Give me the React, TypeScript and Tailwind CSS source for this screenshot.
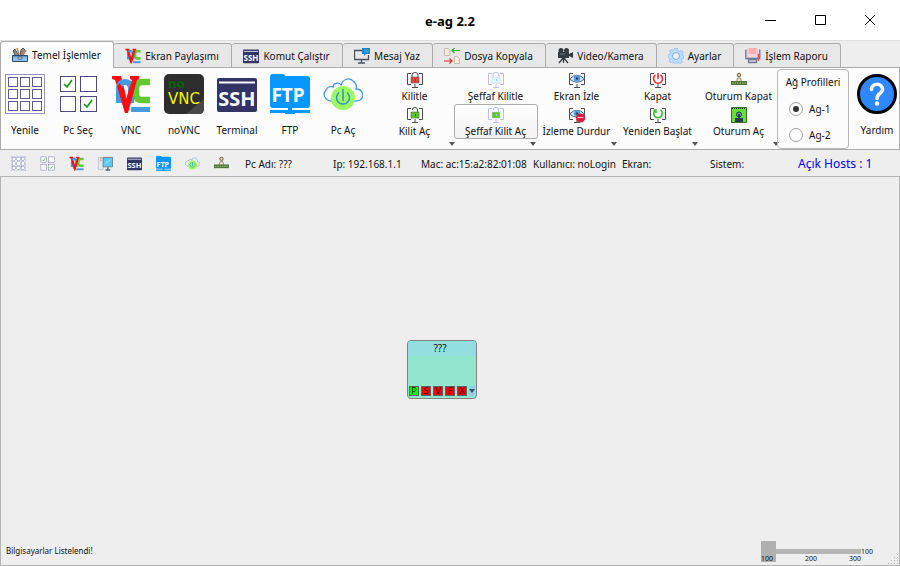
import React, { useState } from "react";

type IconProps = { className?: string };
type IconType = (props: IconProps) => React.ReactElement;

const GridIcon: IconType = ({ className }) => (
  <svg viewBox="0 0 40 40" className={className} fill="#fff" stroke="#5c5c94" aria-hidden="true">
    <rect x=".5" y=".5" width="39" height="39" stroke="#9393bd" />
    {[3.5, 15.5, 27.5].map((y) =>
      [3.5, 15.5, 27.5].map((x) => <rect key={`${x}-${y}`} x={x} y={y} width="9" height="9" />)
    )}
  </svg>
);

const SelectIcon: IconType = ({ className }) => (
  <svg viewBox="0 0 40 40" className={className} fill="none" aria-hidden="true">
    <g stroke="#4f4a80" fill="#fff">
      <rect x="2.5" y="2.5" width="15" height="15" />
      <rect x="22.5" y="2.5" width="16" height="15" />
      <rect x="2.5" y="22.5" width="15" height="15" />
      <rect x="22.5" y="22.5" width="16" height="15" />
    </g>
    <path d="M6 10l3 3 5-7M26 30l3 3 5-7" stroke="#129a12" strokeWidth="1.6" />
  </svg>
);

const VncIcon: IconType = ({ className }) => (
  <svg viewBox="0 0 40 40" className={className} fill="none" aria-hidden="true">
    <path d="M39 8h-8q-6 0-6 6v6q0 6 6 6h8" stroke="#63c832" strokeWidth="6.500" />
    <path d="M20 33h19v5H20z" fill="#459be0" />
    <path d="M1 2h9l5 20L14 38 4 6 1 5z" fill="#f80d12" />
    <path d="M8 29V15q0-7 6-7t6 7v14" stroke="#459be0" strokeWidth="6" />
    <path d="M9 9l6 16 6-19-2-1V2h9v3l-2 1-9 33h-3L6 12z" fill="#f80d12" />
  </svg>
);

const NoVncIcon: IconType = ({ className }) => (
  <svg viewBox="0 0 40 40" className={className} aria-hidden="true">
    <rect width="40" height="40" rx="5" fill="#2d2d2d" />
    <path d="M40 25v10q0 5-5 5H22z" fill="#484848" />
    <g fontFamily="DejaVu Sans, sans-serif">
      <text x="4" y="14" fontSize="12" fontWeight="bold" fill="#0a610a">no</text>
      <text x="4" y="30" fontSize="15" fill="#f5f500">VNC</text>
    </g>
  </svg>
);

const SshIcon: IconType = ({ className }) => (
  <svg viewBox="0 0 40 40" className={className} aria-hidden="true">
    <rect y="4" width="40" height="34" rx="2" fill="#333366" />
    <path d="M2 8.500h36" stroke="#fff" strokeWidth="2" />
    <text x="20" y="32" textAnchor="middle" fontFamily="Noto Sans, sans-serif" fontWeight="bold" fontSize="20" fill="#fff">SSH</text>
  </svg>
);

const FtpIcon: IconType = ({ className }) => (
  <svg viewBox="0 0 40 40" className={className} aria-hidden="true">
    <path d="M0 3q0-3 3-3h10q2 0 2 2h22q3 0 3 3v26q0 3-3 3H3q-3 0-3-3zM0 36h15v3H0zM25 36h15v3H25zM18 33h4v3h3v4H15v-4h3z" fill="#0896ff" />
    <text x="18" y="28" textAnchor="middle" fontFamily="Noto Sans, sans-serif" fontWeight="bold" fontSize="19" fill="#fff">FTP</text>
  </svg>
);

const CloudPowerIcon: IconType = ({ className }) => (
  <svg viewBox="0 0 40 40" className={className} fill="none" aria-hidden="true">
    <path d="M9 27C2 27-1 20 3 16c1-3 4-4 7-3 0-4 6-5 8-2 2-6 8-8 12-4 3 2 4 5 3 8 7 0 9 8 4 11-2 1-4 1-6 1" stroke="#4397dd" strokeWidth="1.300" />
    <circle cx="20" cy="24" r="12" fill="#99fa62" />
    <path d="M16 18.500a6.500 6.500 0 1 0 8 0M20 15v12" stroke="#3191c8" strokeWidth="1.500" />
  </svg>
);

const ToolboxIcon: IconType = ({ className }) => (
  <svg viewBox="0 0 16 16" className={className} aria-hidden="true">
    <path d="M3 8L1 4l2-2 1 2 3 4M8 8l1-5 2-2 2 2-2 5" fill="#8d8d8d" stroke="#333" strokeWidth=".8" />
    <path d="M5 1l2 6M14 3l-3 5" stroke="#c98752" strokeWidth="1.500" />
    <path d="M.5 8.500h15v6H.5z" fill="#8fc4ef" stroke="#304867" />
    <path d="M1 9h14M6 10h4v2H6z" stroke="#304867" strokeWidth=".8" fill="#e4f3ff" />
  </svg>
);

const MessageIcon: IconType = ({ className }) => (
  <svg viewBox="0 0 16 16" className={className} aria-hidden="true">
    <path d="M8 2.500H.5v9h14V7M7.500 12v3M4 15h7" fill="none" stroke="#48525c" strokeWidth="1.300" />
    <path d="M8 0h8v6h-4l-2 2V6H8z" fill="#1686c8" />
    <path d="M10 2h5M10 4h5" stroke="#8ccaf0" strokeWidth=".6" />
  </svg>
);

const CopyIcon: IconType = ({ className }) => (
  <svg viewBox="0 0 16 16" className={className} fill="none" aria-hidden="true">
    <path d="M.5.500h4l1.500 2v5H.5zM10.500 8.500h3l2 2v5h-5z" stroke="#c8bdad" fill="#f4ecdf" />
    <path d="M16 2.500H8M10.500 0L8 2.500 10.500 5" stroke="#20b32e" strokeWidth="1.200" />
    <path d="M0 13h8M5.500 10.500L8 13l-2.500 2.500" stroke="#d92b2b" strokeWidth="1.200" />
  </svg>
);

const CameraIcon: IconType = ({ className }) => (
  <svg viewBox="0 0 16 16" className={className} aria-hidden="true">
    <circle cx="4" cy="2.500" r="2.500" fill="#343b42" />
    <circle cx="9.500" cy="2.500" r="2.500" fill="#343b42" />
    <path d="M1 4h11v6H1zM12 6l4-2v6l-4-2z" fill="#343b42" />
    <path d="M6.500 10v5M6 10l-4 5M7 10l4 5" stroke="#343b42" strokeWidth="1.300" />
    <path d="M3 6h5" stroke="#68737b" />
  </svg>
);

const GearIcon: IconType = ({ className }) => (
  <svg viewBox="0 0 16 16" className={className} aria-hidden="true">
    <path d="M6.500.5h3l.5 2 1.500.7 2-.9 1.600 2-1 1.700.5 1.500 1.400.5v2l-2 .8-.6 1.400.9 1.800-2 1.500-1.800-1-1.500.5-.5 1.500h-2l-.8-1.900-1.500-.6-1.800 1-1.500-2 1-1.800-.5-1.500L0 9V7l1.900-.8.6-1.500-1-1.600 2-1.600 1.500 1z" fill="#bfdcfa" stroke="#8abcf0" strokeWidth=".7" />
    <circle cx="8" cy="8" r="3.500" fill="#e8f4ff" stroke="#75afe9" />
  </svg>
);

const ReportIcon: IconType = ({ className }) => (
  <svg viewBox="0 0 16 16" className={className} aria-hidden="true">
    <path d="M.8 1.500v9h14v-9M3.500 14.500v-3h8v3z" fill="#d5d5e0" stroke="#747696" strokeWidth="1.300" />
    <path d="M3 0h9v9H3z" fill="#ffd7d9" />
    <path d="M3.500 1h8M3.500 3h8M3.500 5h8" stroke="#ef737c" strokeWidth=".8" />
    <path d="M13.500 6v7" stroke="#e54f57" strokeWidth="1.500" />
  </svg>
);

const PcIcon: IconType = ({ className }) => (
  <svg viewBox="0 0 16 16" className={className} aria-hidden="true">
    <path d="M.5 1.500h5v13h-5z" fill="#e5ebef" stroke="#bcc6cc" />
    <path d="M2 3h2M2 5h2" stroke="#de8888" />
    <path d="M5.500 1.500h10v10h-10z" fill="#5bcaf6" stroke="#6c8390" />
    <path d="M10.500 12v3M8 15h5" stroke="#4b6570" strokeWidth="1.500" />
    <path d="M8 8l5-4" stroke="#b5ecff" />
  </svg>
);

const Monitor = ({ color = "#4b4b4b" }: { color?: string }) => (
  <path d="M4 1.500H.5v11H4M12 1.500h3.500v11H12M8 12v3M5 15.500h6" fill="none" stroke={color} />
);

const Lock = ({ frame, body, shackle, open }: { frame?: string; body: string; shackle: string; open?: boolean }) => (
  <>
    <Monitor color={frame} />
    <path d={open ? "M5.500 3V2q0-1.500 2.500-1.500T10.500 3v3" : "M5 6V3q0-2.500 3-2.500T11 3v3"} fill="none" stroke={shackle} />
    <rect x="4" y="5" width="8" height="6" fill={body} stroke={shackle} strokeWidth=".5" />
    <path d="M8.500 7v2" stroke={shackle} />
  </>
);

const LockIcon: IconType = ({ className }) => (
  <svg viewBox="0 0 16 16" className={className} aria-hidden="true"><Lock body="#e44839" shackle="#57444a" /></svg>
);
const UnlockIcon: IconType = ({ className }) => (
  <svg viewBox="0 0 16 16" className={className} aria-hidden="true"><Lock body="#5cc52b" shackle="#42533d" open /></svg>
);
const GlassLockIcon: IconType = ({ className }) => (
  <svg viewBox="0 0 16 16" className={className} aria-hidden="true"><Lock frame="#bcbcf7" body="#dcffff" shackle="#b5c4ef" /></svg>
);
const GlassUnlockIcon: IconType = ({ className }) => (
  <svg viewBox="0 0 16 16" className={className} aria-hidden="true"><Lock frame="#bcbcf7" body="#61cb2c" shackle="#afc6dd" open /></svg>
);

const Eye = () => (
  <>
    <Monitor />
    <path d="M.5 7Q8-.5 15.500 7 8 13.500.5 7z" fill="#cae8ff" stroke="#4a6075" />
    <circle cx="8" cy="6.500" r="3.200" fill="#5a9fe5" />
    <circle cx="8" cy="6.500" r="1.200" fill="#234476" />
  </>
);
const EyeIcon: IconType = ({ className }) => (
  <svg viewBox="0 0 16 16" className={className} aria-hidden="true"><Eye /></svg>
);
const EyeStopIcon: IconType = ({ className }) => (
  <svg viewBox="0 0 16 16" className={className} aria-hidden="true">
    <Eye />
    <circle cx="11.500" cy="11" r="4.500" fill="#df1c3d" />
    <path d="M8.500 10.500h6" stroke="#ffc5cf" />
  </svg>
);
const PowerIcon: IconType = ({ className }) => (
  <svg viewBox="0 0 16 16" className={className} fill="none" aria-hidden="true">
    <Monitor />
    <path d="M5.500 3a4.500 4.500 0 1 0 5 0M8 1v6" stroke="#ee3034" strokeWidth="1.600" />
  </svg>
);
const RestartIcon: IconType = ({ className }) => (
  <svg viewBox="0 0 16 16" className={className} fill="none" aria-hidden="true">
    <Monitor />
    <path d="M10.500 3a4.300 4.300 0 1 1-5 0M3.500 3H6v3" stroke="#35bf37" strokeWidth="1.600" />
  </svg>
);
const LogoutIcon: IconType = ({ className }) => (
  <svg viewBox="0 0 16 16" className={className} aria-hidden="true">
    <circle cx="8" cy="3" r="1.800" fill="#d8cba8" stroke="#6e6044" />
    <path d="M5.500 10l1-4h3l1 4z" fill="#eee3c3" stroke="#756a4e" strokeWidth=".7" />
    <path d="M0 9h16v4H0z" fill="#517638" />
    <path d="M1 11h14" stroke="#b3c487" strokeDasharray="1.500 1" />
  </svg>
);
const LoginIcon: IconType = ({ className }) => (
  <svg viewBox="0 0 16 16" className={className} aria-hidden="true">
    <path d="M.5.500h15v15H.5z" fill="#69dc37" stroke="#386f27" />
    <path d="M1 1.500h14" stroke="#263b24" strokeDasharray="1 1" />
    <path d="M4 15v-4h8v4z" fill="#263d55" />
    <circle cx="8" cy="7.500" r="2.500" fill="#6895b9" stroke="#253b46" />
    <path d="M8 7v4" stroke="#17334a" strokeWidth="1.500" />
  </svg>
);
const HelpIcon: IconType = ({ className }) => (
  <svg viewBox="0 0 40 40" className={className} aria-hidden="true">
    <circle cx="20" cy="20" r="18.500" fill="#2f88ff" stroke="#000" strokeWidth="3" />
    <path d="M14.500 15.500c0-7 11-7 11 0 0 4-5.500 4-5.500 9" fill="none" stroke="#fff" strokeWidth="3.500" strokeLinecap="round" />
    <circle cx="20" cy="29.500" r="2.200" fill="#fff" />
  </svg>
);

const tabs: { label: string; icon: IconType; width: string }[] = [
  { label: "Temel İşlemler", icon: ToolboxIcon, width: "w-[114px]" },
  { label: "Ekran Paylaşımı", icon: VncIcon, width: "w-[118px]" },
  { label: "Komut Çalıştır", icon: SshIcon, width: "w-[111px]" },
  { label: "Mesaj Yaz", icon: MessageIcon, width: "w-[90px]" },
  { label: "Dosya Kopyala", icon: CopyIcon, width: "w-[113px]" },
  { label: "Video/Kamera", icon: CameraIcon, width: "w-[111px]" },
  { label: "Ayarlar", icon: GearIcon, width: "w-[77px]" },
  { label: "İşlem Raporu", icon: ReportIcon, width: "w-[107px]" },
];

const tools: { label: string; icon: IconType }[] = [
  { label: "Yenile", icon: GridIcon },
  { label: "Pc Seç", icon: SelectIcon },
  { label: "VNC", icon: VncIcon },
  { label: "noVNC", icon: NoVncIcon },
  { label: "Terminal", icon: SshIcon },
  { label: "FTP", icon: FtpIcon },
  { label: "Pc Aç", icon: CloudPowerIcon },
];

const groups: { label: string; icon: IconType; active?: boolean }[][] = [
  [{ label: "Kilitle", icon: LockIcon }, { label: "Kilit Aç", icon: UnlockIcon }],
  [{ label: "Şeffaf Kilitle", icon: GlassLockIcon }, { label: "Şeffaf Kilit Aç", icon: GlassUnlockIcon, active: true }],
  [{ label: "Ekran İzle", icon: EyeIcon }, { label: "İzleme Durdur", icon: EyeStopIcon }],
  [{ label: "Kapat", icon: PowerIcon }, { label: "Yeniden Başlat", icon: RestartIcon }],
  [{ label: "Oturum Kapat", icon: LogoutIcon }, { label: "Oturum Aç", icon: LoginIcon }],
];

const quick: { label: string; icon: IconType }[] = [
  { label: "Yenile", icon: GridIcon },
  { label: "Pc Seç", icon: SelectIcon },
  { label: "VNC", icon: VncIcon },
  { label: "Ekran", icon: PcIcon },
  { label: "Terminal", icon: SshIcon },
  { label: "FTP", icon: FtpIcon },
  { label: "Pc Aç", icon: CloudPowerIcon },
  { label: "Oturum Kapat", icon: LogoutIcon },
];

const info: { text: string; width: string }[] = [
  { text: "Pc Adı: ???", width: "w-[88px]" },
  { text: "Ip: 192.168.1.1", width: "w-[88px]" },
  { text: "Mac: ac:15:a2:82:01:08", width: "w-[112px]" },
  { text: "Kullanıcı: noLogin", width: "w-[89px]" },
  { text: "Ekran:", width: "w-[88px]" },
  { text: "Sistem:", width: "w-[88px]" },
];

const ports = [
  { letter: "P", color: "bg-[#00ff00]" },
  { letter: "S", color: "bg-[#ff0000]" },
  { letter: "V", color: "bg-[#ff0000]" },
  { letter: "F", color: "bg-[#ff0000]" },
  { letter: "X", color: "bg-[#ff0000]" },
];

const Arrow = () => (
  <svg viewBox="0 0 6 4" className="h-1 w-1.5" aria-hidden="true">
    <path d="M0 0h6L3 4z" fill="currentColor" />
  </svg>
);

export default function App() {
  const [tab, setTab] = useState(0);
  const [profile, setProfile] = useState("Ag-1");
  const [zoom, setZoom] = useState(100);

  return (
    <div className="flex min-h-screen flex-col overflow-hidden bg-[#eeeeee] font-['Noto_Sans',sans-serif] text-[10px] leading-4 text-[#111111]">
      <header className="grid h-10 shrink-0 grid-cols-[1fr_auto_1fr] items-center bg-white">
        <h1 className="col-start-2 pt-0.5 text-[13px] font-bold text-black">e-ag 2.2</h1>
        <div className="flex justify-end gap-[26px] pr-[18px] text-black">
          {["Küçült", "Büyüt", "Kapat"].map((label, i) => (
            <button key={label} aria-label={label} className="flex size-6 items-center justify-center">
              <svg viewBox="0 0 12 12" className="size-3" fill="none" stroke="currentColor" aria-hidden="true">
                {i === 0 && <path d="M1 6.500h11" />}
                {i === 1 && <path d="M1.500 1.500h10v9h-10z" />}
                {i === 2 && <path d="M1 1l10 10M11 1L1 11" />}
              </svg>
            </button>
          ))}
        </div>
      </header>

      <div role="tablist" className="flex h-7 shrink-0 items-end border-t border-[#dedede]">
        {tabs.map(({ label, icon: Icon, width }, i) => (
          <button
            key={label}
            role="tab"
            aria-selected={tab === i}
            onClick={() => setTab(i)}
            className={`flex shrink-0 items-center justify-center gap-1 rounded-t-[3px] border-t border-r border-[#ababab] pr-px whitespace-nowrap ${width} ${
              tab === i ? "h-[27px] border-l bg-[#fcfcfc]" : "h-[25px] border-b bg-[#e7e7e7]"
            }`}
          >
            <Icon className="size-4 shrink-0" />
            {label}
          </button>
        ))}
        <div className="h-px flex-1 bg-[#ababab]" />
      </div>

      <section className="flex h-[82px] shrink-0 border-x border-b border-[#ababab] bg-[#fcfcfc]">
        <div className="flex shrink-0 gap-[5px] pt-1.5">
          {tools.map(({ label, icon: Icon }) => (
            <button key={label} className="flex w-12 flex-col items-center gap-2 self-start whitespace-nowrap">
              <Icon className="size-10" />
              {label}
            </button>
          ))}
        </div>
        <div className="ml-[7px] flex shrink-0 pt-px">
          {groups.map((group) => (
            <div key={group[0].label} className="flex w-[81px] flex-col items-center">
              {group.map(({ label, icon: Icon, active }) => (
                <button
                  key={label}
                  className={`flex h-[35px] w-[84px] flex-col items-center rounded-[3px] border pt-0.5 whitespace-nowrap ${
                    active ? "border-[#ababab] bg-linear-to-b from-white to-[#f2f2f2]" : "border-transparent"
                  }`}
                >
                  <Icon className="size-4 shrink-0" />
                  {label}
                </button>
              ))}
              <button aria-label={`${group[0].label} menüsü`} className="self-end py-[3px] text-[#555555]">
                <Arrow />
              </button>
            </div>
          ))}
        </div>
        <div
          role="radiogroup"
          aria-labelledby="profiles-title"
          className="mt-px -ml-0.5 flex w-[72px] shrink-0 flex-col rounded-[4px] border border-[#b9b9b9] pt-1"
        >
          <div id="profiles-title" className="text-center whitespace-nowrap">Ağ Profilleri</div>
          {["Ag-1", "Ag-2"].map((name) => (
            <label key={name} className="flex h-[26px] items-center gap-1.5 pl-[11px] first-of-type:mt-1.5">
              <input
                type="radio"
                name="profile"
                checked={profile === name}
                onChange={() => setProfile(name)}
                className="size-3.5 appearance-none rounded-full border border-[#a0a0a0] bg-white bg-clip-content p-[3px] checked:bg-[#333333]"
              />
              {name}
            </label>
          ))}
        </div>
        <button className="ml-1 flex w-12 shrink-0 flex-col items-center gap-2 self-start pt-1.5">
          <HelpIcon className="size-10" />
          Yardım
        </button>
      </section>

      <div className="flex h-[26px] shrink-0 items-center pt-px pl-[11px] whitespace-nowrap">
        <div className="flex w-[234px] shrink-0 gap-3.5">
          {quick.map(({ label, icon: Icon }) => (
            <button key={label} aria-label={label}>
              <Icon className="size-[15px]" />
            </button>
          ))}
        </div>
        {info.map(({ text, width }) => (
          <span key={text} className={`shrink-0 ${width}`}>{text}</span>
        ))}
        <span className="text-[12px] text-[#0000ff]">Açık Hosts : 1</span>
      </div>

      <main className="flex flex-1 flex-col border border-[#b4b4b4]">
        <div className="grid flex-1 place-items-center pt-5 pr-4">
          <article className="flex h-[59px] w-[70px] flex-col overflow-hidden rounded-[4px] border border-[#808080] bg-[#93e6cd]">
            <h2 className="h-[15px] bg-[#93dfdf] pr-1 text-center leading-[15px]">???</h2>
            <div className="mt-auto flex items-center gap-0.5 px-px pb-0.5">
              {ports.map(({ letter, color }) => (
                <button key={letter} className={`size-2.5 border border-[#606060] text-[9px] leading-2 ${color}`}>
                  {letter}
                </button>
              ))}
              <button aria-label="Bilgisayar menüsü" className="flex h-2.5 flex-1 items-center justify-center bg-[#93cfe6] text-[#34507a]">
                <Arrow />
              </button>
            </div>
          </article>
        </div>
        <footer className="flex h-6 shrink-0 items-start pl-[5px]">
          <p className="pt-0.5 text-[8px]">Bilgisayarlar Listelendi!</p>
          <div className="ml-auto w-[100px] text-[7px] leading-2">
            <input
              type="range"
              min="100"
              max="300"
              value={zoom}
              onChange={(e) => setZoom(Number(e.target.value))}
              aria-label="Boyut"
              className="block h-[21px] w-full appearance-none bg-transparent [&::-webkit-slider-runnable-track]:h-[5px] [&::-webkit-slider-runnable-track]:bg-[#b5b5b5] [&::-webkit-slider-thumb]:-mt-2 [&::-webkit-slider-thumb]:h-[21px] [&::-webkit-slider-thumb]:w-[15px] [&::-webkit-slider-thumb]:appearance-none [&::-webkit-slider-thumb]:bg-[#b0b0b0]"
            />
            <div className="relative -mt-[7px] flex justify-between">
              <span>100</span>
              <span>200</span>
              <span>300</span>
            </div>
          </div>
          <output className="pt-[7px] text-[7px] leading-2">{zoom}</output>
          <svg viewBox="0 0 12 12" className="ml-3.5 size-3 self-end" fill="#b4b4b4" aria-hidden="true">
            {[0, 3, 6, 9].map((y) =>
              [0, 3, 6, 9].filter((x) => x + y >= 9).map((x) => <rect key={`${x}-${y}`} x={x + 1} y={y + 1} width="1" height="1" />)
            )}
          </svg>
        </footer>
      </main>
    </div>
  );
}
